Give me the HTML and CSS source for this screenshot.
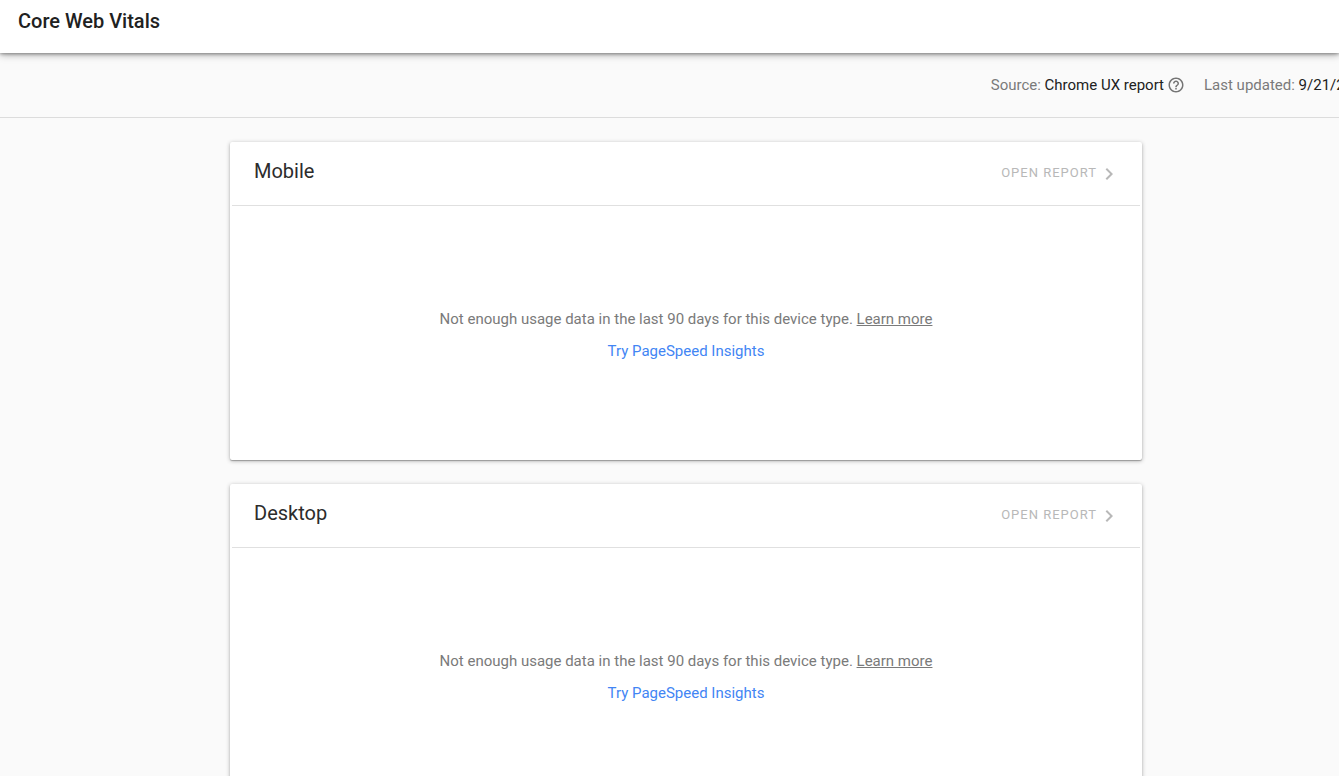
FILE: index.html
```html
<!DOCTYPE html>
<html lang="en">
<head>
    <meta charset="UTF-8">
    <meta name="viewport" content="width=device-width, initial-scale=1.0">
    <title>Core Web Vitals</title>
    <link rel="stylesheet" href="styles.css">
</head>
<body>

    <!-- Header -->
    <header class="page-header">
        <h1>Core Web Vitals</h1>
    </header>

    <!-- Source and date bar -->
    <div class="info-bar">
        <div class="info-item">
            <span>Source: <span class="info-value">Chrome UX report</span></span>
            <button class="help-btn" type="button" aria-label="Help">
                <svg viewBox="0 0 24 24" width="18" height="18"><path d="M11 18h2v-2h-2v2zm1-16C6.48 2 2 6.48 2 12s4.480 10 10 10 10-4.480 10-10S17.520 2 12 2zm0 18c-4.410 0-8-3.590-8-8s3.590-8 8-8 8 3.590 8 8-3.590 8-8 8zm0-14c-2.210 0-4 1.790-4 4h2c0-1.100.9-2 2-2s2 .9 2 2c0 2-3 1.750-3 5h2c0-2.250 3-2.500 3-5 0-2.210-1.790-4-4-4z"/></svg>
            </button>
        </div>
        <div class="info-item updated">
            <span>Last updated: <span class="info-value">9/21/2</span></span>
        </div>
    </div>

    <!-- Main Content -->
    <main class="container">

        <section class="card">
            <div class="card-header">
                <h2>Mobile</h2>
                <button class="report-btn" type="button" disabled>
                    <span>OPEN REPORT</span>
                    <svg viewBox="0 0 24 24" width="24" height="24"><path d="M10 6L8.590 7.410 13.170 12l-4.580 4.590L10 18l6-6z"/></svg>
                </button>
            </div>
            <div class="card-body">
                <p>Not enough usage data in the last 90 days for this device type. <a class="learn-more" href="#">Learn more</a></p>
                <a class="insights-link" href="#">Try PageSpeed Insights</a>
            </div>
        </section>

        <section class="card">
            <div class="card-header">
                <h2>Desktop</h2>
                <button class="report-btn" type="button" disabled>
                    <span>OPEN REPORT</span>
                    <svg viewBox="0 0 24 24" width="24" height="24"><path d="M10 6L8.590 7.410 13.170 12l-4.580 4.590L10 18l6-6z"/></svg>
                </button>
            </div>
            <div class="card-body">
                <p>Not enough usage data in the last 90 days for this device type. <a class="learn-more" href="#">Learn more</a></p>
                <a class="insights-link" href="#">Try PageSpeed Insights</a>
            </div>
        </section>

    </main>

</body>
</html>
```

FILE: styles.css
```css
* {
    box-sizing: border-box;
}

body {
    font-family: Roboto, Arial, sans-serif;
    font-size: 15px;
    line-height: 20px;
    margin: 0;
    background-color: #fafafa;
    color: #7a7a7a;
}

h1,
h2,
p {
    margin: 0;
}

button {
    font-family: inherit;
    border: none;
    padding: 0;
    background: transparent;
}

svg {
    display: block;
    fill: currentColor;
}

/* Header */
.page-header {
    position: relative;
    padding: 9px 18px 20px;
    background-color: #fff;
    box-shadow: 0 1px 8px rgba(0, 0, 0, 0.4), 0 1px 3px rgba(0, 0, 0, 0.3);
}

.page-header h1 {
    font-size: 20px;
    font-weight: 500;
    line-height: 24px;
    color: #212121;
}

/* Source and date bar */
.info-bar {
    display: flex;
    justify-content: flex-end;
    gap: 19px;
    padding: 22px 0;
    border-bottom: 1px solid #dcdcdc;
    overflow: hidden;
}

.info-item {
    display: flex;
    align-items: center;
    gap: 3px;
    white-space: nowrap;
}

.info-value {
    color: #212121;
}

/* The date runs past the right edge */
.updated {
    width: 135px;
}

.help-btn {
    color: #757575;
    cursor: pointer;
}

/* Cards */
.container {
    padding: 24px 0 24px 33px;
}

.card {
    max-width: 912px;
    margin: 0 auto 24px;
    padding: 0 2px;
    background-color: #fff;
    border-radius: 2px;
    box-shadow: 0 1px 4px rgba(0, 0, 0, 0.3), 0 1px 1px rgba(0, 0, 0, 0.25);
}

.card-header {
    display: flex;
    justify-content: space-between;
    align-items: center;
    height: 64px;
    padding: 0 19px 0 22px;
    border-bottom: 1px solid #e0e0e0;
}

.card-header h2 {
    font-size: 20px;
    font-weight: 400;
    line-height: 24px;
    padding-bottom: 6px;
    color: #2c2c2c;
}

.report-btn {
    display: flex;
    align-items: center;
    font-size: 13px;
    letter-spacing: 1px;
    color: #b8b8b8;
}

.report-btn span {
    padding-bottom: 2px;
}

.card-body {
    display: flex;
    flex-direction: column;
    align-items: center;
    justify-content: center;
    gap: 12px;
    min-height: 254px;
    padding-top: 4px;
}

.learn-more {
    color: inherit;
}

.insights-link {
    color: #4285f4;
    text-decoration: none;
}
```
